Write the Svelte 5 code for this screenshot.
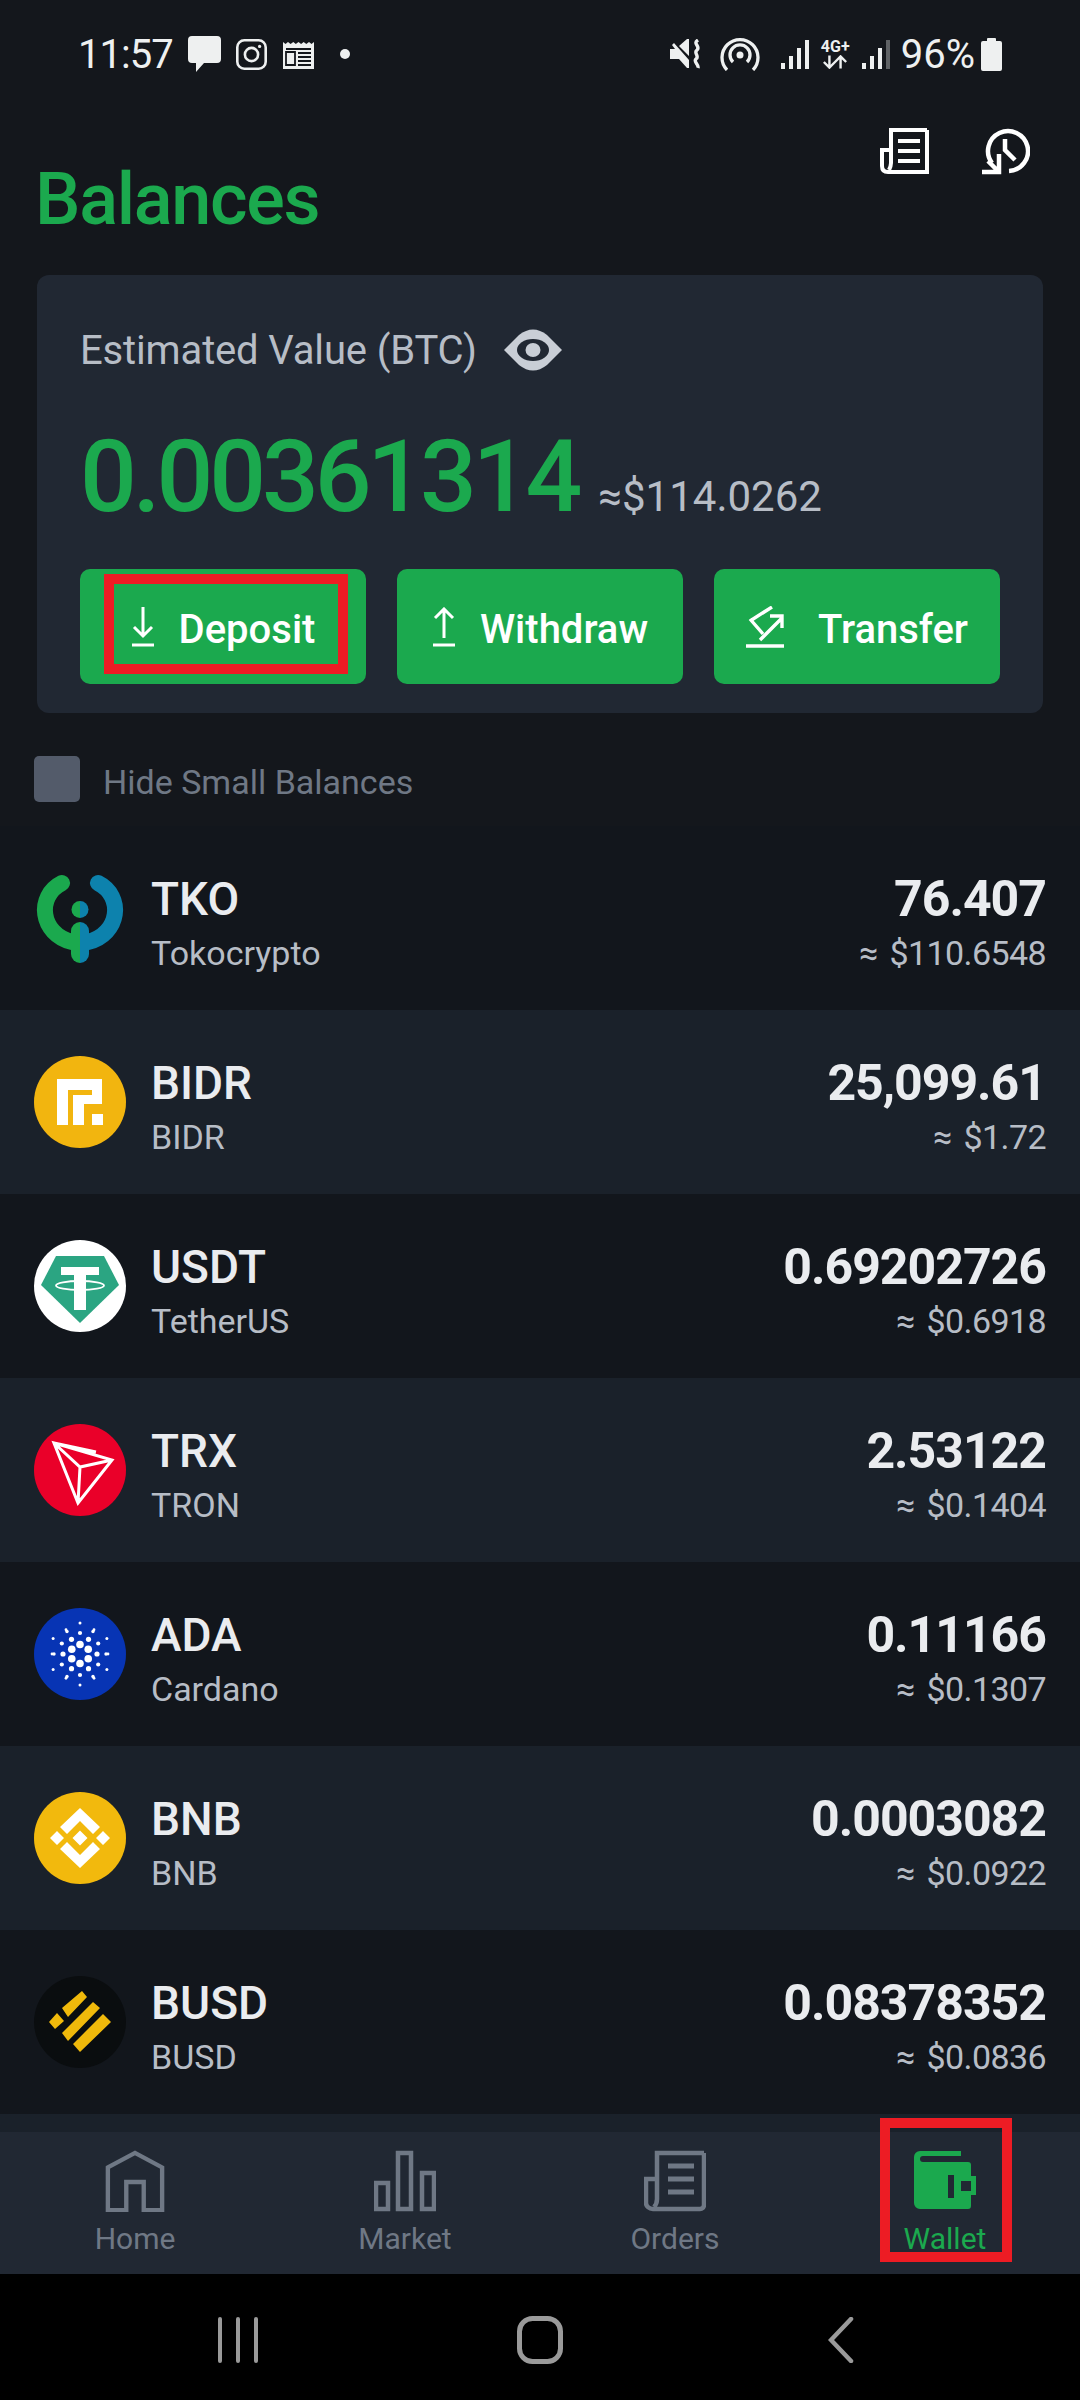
<script>
  const rows = [
    { sym: 'TKO', name: 'Tokocrypto', amt: '76.407', usd: '≈ $110.6548', icon: 'tko' },
    { sym: 'BIDR', name: 'BIDR', amt: '25,099.61', usd: '≈ $1.72', icon: 'bidr' },
    { sym: 'USDT', name: 'TetherUS', amt: '0.69202726', usd: '≈ $0.6918', icon: 'usdt' },
    { sym: 'TRX', name: 'TRON', amt: '2.53122', usd: '≈ $0.1404', icon: 'trx' },
    { sym: 'ADA', name: 'Cardano', amt: '0.11166', usd: '≈ $0.1307', icon: 'ada' },
    { sym: 'BNB', name: 'BNB', amt: '0.0003082', usd: '≈ $0.0922', icon: 'bnb' },
    { sym: 'BUSD', name: 'BUSD', amt: '0.08378352', usd: '≈ $0.0836', icon: 'busd' }
  ];
  const adaDots = [];
  for (const [r, n, s, o] of [[9.5,6,3.8,30],[17,6,2.6,0],[21,6,2.1,30],[26,6,1.7,0],[31,6,1.5,30],[28,6,1.4,0]]) {
    for (let i = 0; i < n; i++) {
      const a = (i * 360 / n + o) * Math.PI / 180;
      adaDots.push({ x: 46 + r * Math.cos(a), y: 46 + r * Math.sin(a), s });
    }
  }
</script>

<div class="screen">
  <div class="status">
    <div class="st-left">
      <span class="clock">11:57</span>
      <svg class="s-msg" viewBox="0 0 33 36"><path d="M4 0h25a4 4 0 0 1 4 4v19a4 4 0 0 1-4 4H16l-8 9v-9H4a4 4 0 0 1-4-4V4a4 4 0 0 1 4-4z" fill="#eef0f0"/></svg>
      <svg class="s-ig" viewBox="0 0 31 31" fill="none" stroke="#eef0f0" stroke-width="2.6"><rect x="1.3" y="1.3" width="28.4" height="28.4" rx="7"/><circle cx="15.5" cy="15.5" r="6.6"/><circle cx="23.6" cy="7.4" r="1.6" fill="#eef0f0" stroke="none"/></svg>
      <svg class="s-news" viewBox="0 0 31 29"><path d="M0 2l2.5 2L5 2l2.6 2L10.3 2l2.5 2L15.5 2l2.6 2L20.7 2l2.6 2L26 2l2.5 2L31 2v27H0z" fill="#eef0f0"/><path d="M3 9h25M3 12h9v13H3zM15 13h13M15 17h13M15 21h13M15 25h13" fill="none" stroke="#14171c" stroke-width="1.8"/></svg>
      <span class="s-dot"></span>
    </div>
    <div class="st-right">
      <svg class="s-mute" viewBox="0 0 32 30"><path d="M0 10h5L2 6l2-2 15 17v8h-2l-8-9H0zM9 7l8-7h2v17z" fill="#eef0f0"/><path d="M28 1c-6 4 3 6-1 10-4 3 3 6-1 9-3 3 3 5 2 9" fill="none" stroke="#eef0f0" stroke-width="3.4"/></svg>
      <svg class="s-hot" viewBox="0 0 40 34" fill="none" stroke="#eef0f0" stroke-width="3.3"><path d="M7 33a18 18 0 1 1 26 0"/><path d="M13 25a10 10 0 1 1 14 0"/><circle cx="20" cy="18" r="3.5" fill="#eef0f0" stroke="none"/></svg>
      <svg class="s-sig" viewBox="0 0 28 29" fill="#eef0f0"><rect x="0" y="23" width="4" height="6"/><rect x="8" y="16" width="4" height="13"/><rect x="16" y="8" width="4" height="21"/><rect x="24" y="0" width="4" height="29"/></svg>
      <div class="s-4g"><span>4G+</span><svg viewBox="0 0 28 14" fill="none" stroke="#eef0f0" stroke-width="2.6"><path d="M8 0v12M2 7l6 6 6-6M20 14V2M14 7l6-6 6 6"/></svg></div>
      <svg class="s-sig2" viewBox="0 0 28 29" fill="#eef0f0"><rect x="0" y="23" width="4" height="6"/><rect x="8" y="16" width="4" height="13"/><rect x="16" y="8" width="4" height="21"/><rect x="24" y="0" width="4" height="29" opacity=".35"/></svg>
      <span class="pct">96%</span>
      <svg class="s-bat" viewBox="0 0 21 33"><path d="M6 3V1a1 1 0 0 1 1-1h7a1 1 0 0 1 1 1v2h4a2 2 0 0 1 2 2v26a2 2 0 0 1-2 2H2a2 2 0 0 1-2-2V5a2 2 0 0 1 2-2z" fill="#eef0f0"/></svg>
    </div>
  </div>

  <div class="head-icons">
    <svg class="h-orders" viewBox="0 0 49 46" fill="none" stroke="#fff" stroke-width="4"><path d="M47 2H11v33c0 3-1 5-2 7"/><path d="M47 2v42H8c-4 0-6-2-6-6V22h9"/><path d="M18 13h22M18 23h22M18 33h22"/></svg>
    <svg class="h-hist" viewBox="0 0 48 48" fill="none" stroke="#fff" stroke-width="4.5"><path d="M10 35A20 20 0 1 1 27 43"/><path d="M23 11v11l10 10"/><path d="M17 26v18H0M6 33l11 11"/></svg>
  </div>

  <h1>Balances</h1>

  <section class="card">
    <div class="est"><span>Estimated Value (BTC)</span>
      <svg class="eye" viewBox="0 0 58 42"><path d="M0 21 15 6q14-11 28 0l15 15-15 15q-14 11-28 0z" fill="#c9ced6"/><ellipse cx="29" cy="21" rx="16" ry="11" fill="#212833"/><ellipse cx="29" cy="21" rx="7.5" ry="7" fill="#c9ced6"/></svg>
    </div>
    <div class="val"><span class="big">0.00361314</span><span class="approx">≈$114.0262</span></div>
    <div class="btns">
      <button class="btn">
        <svg class="i-dep" viewBox="0 0 24 40" fill="none" stroke="#fff" stroke-width="3"><path d="M12 0v29M3 20l9 9 9-9M1 38h22"/></svg>
        <span>Deposit</span>
        <i class="mark"></i>
      </button>
      <button class="btn">
        <svg class="i-dep" viewBox="0 0 24 40" fill="none" stroke="#fff" stroke-width="3"><path d="M12 31V2M3 11l9-9 9 9M1 38h22"/></svg>
        <span>Withdraw</span>
      </button>
      <button class="btn wide">
        <svg class="i-tr" viewBox="0 0 38 42" fill="none" stroke="#fff" stroke-width="3.4"><path d="M0 40h38"/><path d="M14 34 36 12M24 10h12v12"/><path d="M26 1 4 15M4 13l13 15"/></svg>
        <span>Transfer</span>
      </button>
    </div>
  </section>

  <div class="hide"><span class="box"></span><span>Hide Small Balances</span></div>

  <div class="list">
    {#each rows as r, i}
      <div class="row" class:alt={i % 2 === 1}>
        <svg class="coin" viewBox="0 0 92 92">
          {#if r.icon === 'tko'}
            <path d="M28 11C2 24 6 62 38 70" fill="none" stroke="#1ba94e" stroke-width="16" stroke-linecap="round"/>
            <path d="M64 11c26 13 22 51-10 59" fill="none" stroke="#0d82ad" stroke-width="16" stroke-linecap="round"/>
            <path d="M46 50a9 9 0 0 0-9 9v23a9 9 0 0 0 9 9z" fill="#1ba94e"/>
            <path d="M46 50a9 9 0 0 1 9 9v23a9 9 0 0 1-9 9z" fill="#0d82ad"/>
            <path d="M46 29a8.5 8.5 0 0 0 0 17z" fill="#1ba94e"/>
            <path d="M46 29a8.5 8.5 0 0 1 0 17z" fill="#0d82ad"/>
          {:else if r.icon === 'bidr'}
            <circle cx="46" cy="46" r="46" fill="#f2b50f"/>
            <path d="M23 23H68V48H58V34H34V69H23zM39 39H58V48H50V69H39z" fill="#fff"/>
            <rect x="58" y="58" width="11" height="11" fill="#fff"/>
          {:else if r.icon === 'usdt'}
            <circle cx="46" cy="46" r="46" fill="#fff"/>
            <path d="M22 16h48l15 29-39 38L7 45z" fill="#2ba582"/>
            <path d="M27 27h38v8H52v35H40V35H27z" fill="#fff"/>
            <ellipse cx="46" cy="45.5" rx="24" ry="4.5" fill="none" stroke="#fff" stroke-width="1.8"/>
          {:else if r.icon === 'trx'}
            <circle cx="46" cy="46" r="46" fill="#ea0029"/>
            <path d="M20 19 78 36 44 79zM20 19l26 24 32-7M46 43l-2 36M20 19l42 9" fill="none" stroke="#fff" stroke-width="3"/>
          {:else if r.icon === 'ada'}
            <circle cx="46" cy="46" r="46" fill="#0734b4"/>
            {#each adaDots as d}
              <circle cx={d.x} cy={d.y} r={d.s} fill="#fff"/>
            {/each}
          {:else if r.icon === 'bnb'}
            <circle cx="46" cy="46" r="46" fill="#f2b90d"/>
            <path d="M46 16 66 35l-7 7-13-13-13 13-7-7zM16 46l7-7 7 7-7 7zM38.5 46l7.5-7.5 7.5 7.5-7.5 7.5zM62 46l7-7 7 7-7 7zM46 76 26 57l7-7 13 13 13-13 7 7z" fill="#fff"/>
          {:else}
            <circle cx="46" cy="46" r="46" fill="#0a0d0f"/>
            <path d="M28 32 48 15l5 6-19 20zM15 46l8-9 7 8-9 8zM28 57 59 26l7 6-32 33zM39 68 69 38l8 8-31 30z" fill="#f0b90b"/>
          {/if}
        </svg>
        <div class="names"><div class="sym">{r.sym}</div><div class="nm">{r.name}</div></div>
        <div class="amts"><div class="amt">{r.amt}</div><div class="usd">{r.usd}</div></div>
      </div>
    {/each}
  </div>

  <nav class="nav">
    <div class="tab">
      <svg viewBox="0 0 60 64" fill="none" stroke="#6f7885" stroke-width="4.5"><path d="M2 18 30 3l28 15v44H39V33H21v29H2z"/></svg>
      <span>Home</span>
    </div>
    <div class="tab">
      <svg viewBox="0 0 62 60" fill="none" stroke="#6f7885" stroke-width="4.5"><path d="M2 32h12v26H2zM24 2h13v56H24zM48 22h12v36H48z"/></svg>
      <span>Market</span>
    </div>
    <div class="tab">
      <svg viewBox="0 0 62 60" fill="none" stroke="#6f7885" stroke-width="4.5"><path d="M60 2H13v46c0 3-1 6-3 8"/><path d="M60 2v52a4 4 0 0 1-4 4H9c-4 0-7-3-7-6V28h10"/><path d="M24 15h26M24 28h26M24 41h26" stroke-width="5"/></svg>
      <span>Orders</span>
    </div>
    <div class="tab on">
      <svg viewBox="0 0 62 60"><path d="M6 0h41v5H9a2 2 0 0 0 0 6h45a3 3 0 0 1 3 3v11h5v19h-5v11a3 3 0 0 1-3 3H6a6 6 0 0 1-6-6V6a6 6 0 0 1 6-6z" fill="#1ba94e"/><path d="M34 24h6v23h-6z" fill="#212833"/><path d="M47 30h10v10H47z" fill="#212833"/></svg>
      <span>Wallet</span>
      <i class="mark2"></i>
    </div>
  </nav>

  <div class="sys">
    <svg class="k1" viewBox="0 0 42 46" fill="none" stroke="#9a9a9a" stroke-width="4" stroke-linecap="round"><path d="M3 2v42M21 2v42M39 2v42"/></svg>
    <svg class="k2" viewBox="0 0 46 48" fill="none" stroke="#9a9a9a" stroke-width="5"><rect x="2.5" y="2.5" width="41" height="43" rx="13"/></svg>
    <svg class="k3" viewBox="0 0 26 46" fill="none" stroke="#9a9a9a" stroke-width="4.5" stroke-linecap="round"><path d="M23 2 3 23l20 21"/></svg>
  </div>
</div>

<style>
  :global(body) { margin: 0; background: #14171c; }
  .screen { width: 1080px; height: 2400px; background: #14171c; font-family: Roboto, "Liberation Sans", sans-serif; display: flex; flex-direction: column; overflow: hidden; }
  .status { height: 100px; box-sizing: border-box; padding: 36px 78px 0 78px; display: flex; justify-content: space-between; align-items: flex-start; color: #eef0f0; }
  .st-left, .st-right { display: flex; align-items: center; height: 36px; }
  .clock { font-size: 40px; margin-right: 15px; letter-spacing: -1px; }
  .s-msg { width: 33px; height: 36px; margin-right: 15px; }
  .s-ig { width: 31px; height: 31px; margin-right: 16px; }
  .s-news { width: 31px; height: 29px; margin-right: 26px; }
  .s-dot { width: 10px; height: 10px; border-radius: 50%; background: #eef0f0; }
  .s-mute { width: 32px; height: 30px; margin-right: 18px; }
  .s-hot { width: 40px; height: 34px; margin-right: 21px; }
  .s-sig { width: 28px; height: 29px; margin-right: 11px; }
  .s-4g { width: 31px; margin-right: 11px; display: flex; flex-direction: column; align-items: center; font-size: 16px; font-weight: 700; line-height: 16px; }
  .s-4g svg { width: 26px; height: 14px; }
  .s-sig2 { width: 28px; height: 29px; margin-right: 11px; }
  .pct { font-size: 40px; margin-right: 6px; }
  .s-bat { width: 21px; height: 33px; }
  .head-icons { height: 0; display: flex; justify-content: flex-end; align-items: flex-start; padding-right: 50px; gap: 53px; position: relative; top: 28px; }
  .h-orders { width: 49px; height: 46px; }
  .h-hist { width: 48px; height: 48px; }
  h1 { margin: 0; font-size: 72px; font-weight: 500; letter-spacing: -1.3px; color: #1ba94e; line-height: 84px; height: 175px; box-sizing: border-box; padding: 58px 0 0 35px; }
  .card { margin: 0 37px; height: 438px; box-sizing: border-box; background: #212833; border-radius: 12px; padding: 52px 43px 0; }
  .est { display: flex; align-items: center; gap: 27px; height: 46px; font-size: 40px; letter-spacing: -0.15px; color: #b7bdc6; }
  .eye { width: 58px; height: 42px; }
  .val { display: flex; align-items: baseline; gap: 20px; margin-top: 48px; height: 114px; line-height: 112px; }
  .big { font-size: 100px; font-weight: 500; color: #1ba94e; letter-spacing: -4.1px; }
  .approx { font-size: 42px; color: #b7bdc6; }
  .btns { display: flex; gap: 31px; margin-top: 34px; }
  .btn { position: relative; width: 286px; height: 115px; border: 0; padding: 0; background: #1ba94e; border-radius: 10px; color: #fff; font: 500 40px Roboto, sans-serif; display: flex; align-items: center; justify-content: center; gap: 24px; }
  .btn span { padding-top: 5px; }
  .btn.wide { gap: 34px; }
  .i-dep { width: 24px; height: 40px; }
  .i-tr { width: 38px; height: 42px; }
  .mark { position: absolute; left: 24px; top: 5px; width: 244px; height: 100px; box-sizing: border-box; border: 10px solid #ed1c24; }
  .hide { display: flex; align-items: center; gap: 23px; padding-left: 34px; margin-top: 43px; height: 46px; font-size: 34px; color: #6f7885; margin-bottom: 24px; }
  .hide span:last-child { padding-top: 6px; }
  .list { flex: none; }
  .box { width: 46px; height: 46px; border-radius: 5px; background: #535b6a; }
  .row { height: 184px; box-sizing: border-box; display: flex; align-items: center; padding: 0 34px; background: #12161c; }
  .row.alt { background: #1a212a; }
  .coin { width: 92px; height: 92px; margin-right: 25px; flex: none; }
  .names { flex: 1; padding-top: 13px; }
  .sym { font-size: 46px; font-weight: 500; color: #eaecef; line-height: 56px; }
  .nm { font-size: 34px; color: #b7bdc6; line-height: 52px; }
  .amts { text-align: right; padding-top: 13px; }
  .amt { font-size: 50px; font-weight: 700; letter-spacing: -1px; color: #eaecef; line-height: 56px; }
  .usd { font-size: 34px; letter-spacing: -0.6px; word-spacing: 4px; color: #b7bdc6; line-height: 52px; }
  .nav { height: 142px; margin-top: 18px; background: #212833; display: flex; padding-left: 0; position: relative; }
  .nav::before { content: ""; position: absolute; left: 0; right: 0; top: -18px; height: 18px; background: #1a212a; }
  .tab { position: relative; width: 270px; display: flex; flex-direction: column; align-items: center; color: #6f7885; font-size: 30px; padding-top: 18px; box-sizing: border-box; }
  .tab svg { width: 62px; height: 62px; margin-bottom: 9px; }
  .tab.on { color: #1ba94e; }
  .mark2 { position: absolute; left: 70px; top: -14px; width: 132px; height: 144px; box-sizing: border-box; border: 10px solid #ed1c24; }
  .sys { height: 126px; box-sizing: border-box; padding-top: 6px; background: #000; display: flex; align-items: center; position: relative; }
  .k1 { width: 42px; height: 46px; margin-left: 217px; }
  .k2 { width: 46px; height: 48px; margin-left: 258px; }
  .k3 { width: 26px; height: 46px; margin-left: 265px; }
</style>
